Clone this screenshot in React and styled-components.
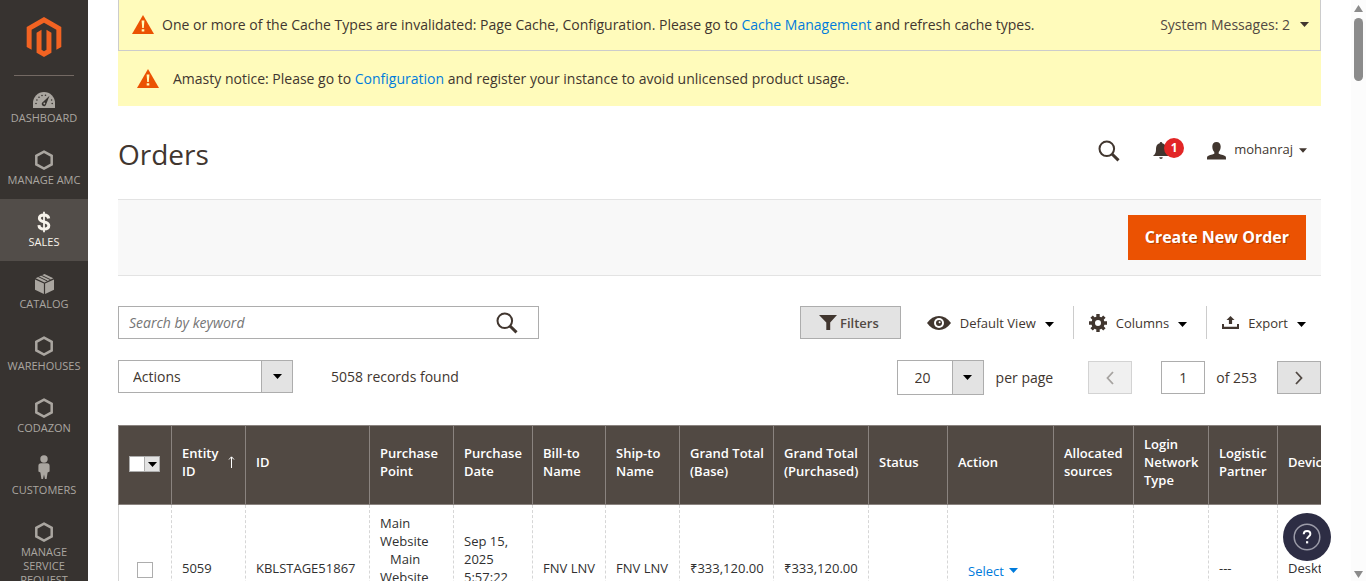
import React from "react";
import styled, { createGlobalStyle, css } from "styled-components";

const GlobalStyle = createGlobalStyle`
  *, *::before, *::after { box-sizing: border-box; }
  html, body { margin: 0; background: #fff; }
  body, button, input, select {
    font-family: "Open Sans", "Noto Sans", sans-serif;
    font-size: 14px;
    color: #41362f;
  }
  body { overflow: hidden; }
  a { color: #007bdb; text-decoration: none; }
  button { background: none; border: 0; padding: 0; cursor: pointer; }
  svg { display: block; flex: none; }
`;

const Shell = styled.div`
  display: flex;
  height: 100vh;
  overflow: hidden;
`;

/* ---------- side menu ---------- */

const Nav = styled.nav`
  flex: none;
  width: 88px;
  background: #373330;
`;

const LogoLink = styled.a`
  display: flex;
  justify-content: center;
  align-items: center;
  height: 75px;
  padding-bottom: 2px;
  color: #f26322;
`;

const Menu = styled.ul`
  list-style: none;
  margin: 0;
  padding: 0;
`;

const MenuItem = styled.li`
  &:first-child::before {
    content: "";
    display: block;
    height: 1px;
    margin: 0 14px -1px;
    background: #736963;
  }
`;

const MenuLink = styled.a`
  display: flex;
  flex-direction: column;
  align-items: center;
  gap: 3px;
  padding: 13px 0 12px;
  font-size: 11px;
  line-height: 14px;
  text-align: center;
  text-transform: uppercase;
  color: ${(p) => (p.$active ? "#f7f3eb" : "#aaa6a0")};
  background: ${(p) => (p.$active ? "#524d49" : "transparent")};
`;

const MenuLabel = styled.span`
  max-width: ${(p) => (p.$narrow ? "60px" : "88px")};
`;

const MenuIcon = styled.span`
  display: flex;
  align-items: center;
  justify-content: center;
  height: 20px;
`;

/* ---------- page ---------- */

const Main = styled.main`
  flex: 1;
  min-width: 0;
  padding: 0 30px;
`;

const SystemBar = styled.div`
  display: flex;
  align-items: center;
  height: 51px;
  padding: 0 11px 2px 13px;
  background: #fffbbb;
  border: 1px solid #ccc;
  border-top: 0;
`;

const Message = styled.p`
  margin: 0 auto 0 8px;
`;

const Notice = styled.div`
  display: flex;
  align-items: center;
  gap: 14px;
  height: 55px;
  padding: 0 19px;
  background: #fffbbb;
`;

const NoticeText = styled.p`
  margin: 0;
`;

const SystemToggle = styled.button`
  display: flex;
  align-items: center;
  gap: 10px;
  color: #514943;
`;

const Header = styled.header`
  display: flex;
  align-items: center;
  height: 93px;
  padding: 0 14px 4px 0;
`;

const Title = styled.h1`
  margin: 6px auto 0 0;
  font-size: 28px;
  line-height: 38px;
  font-weight: 400;
`;

const HeaderButton = styled.button`
  position: relative;
  display: flex;
  align-items: center;
  gap: 6px;
  margin-left: ${(p) => p.$before || 0}px;
  font-size: 13px;
  line-height: 18px;
`;

const Badge = styled.span`
  position: absolute;
  left: 11px;
  top: -4px;
  width: 20px;
  height: 20px;
  border-radius: 50%;
  background: #e22626;
  color: #fff;
  font-size: 12px;
  line-height: 20px;
  font-weight: 700;
  text-align: center;
`;

const UserName = styled.span`
  padding: 0 0 3px 2px;
`;

const ActionBar = styled.div`
  display: flex;
  justify-content: flex-end;
  padding: 15px;
  background: #f8f8f8;
  border: solid #e3e3e3;
  border-width: 1px 0;
`;

const PrimaryButton = styled.button`
  height: 45px;
  padding: 0 17px 2px;
  background: #eb5202;
  color: #fff;
  font-size: 16px;
  font-weight: 700;
  text-shadow: 1px 1px 0 rgba(0, 0, 0, 0.25);
`;

const Row = styled.div`
  display: flex;
  align-items: center;
  margin-top: ${(p) => p.$top}px;
`;

const SearchBox = styled.form`
  display: flex;
  align-items: center;
  width: 421px;
  height: 33px;
  margin-right: auto;
  padding: 0 20px 0 10px;
  border: 1px solid #adadad;
`;

const SearchInput = styled.input`
  flex: 1;
  min-width: 0;
  padding: 0;
  border: 0;
  outline: 0;
  &::placeholder { font-style: italic; color: #757575; opacity: 1; }
`;

const FilterButton = styled.button`
  display: flex;
  align-items: center;
  gap: 3px;
  height: 33px;
  margin-right: 11px;
  padding: 0 21px 0 18px;
  background: #e3e3e3;
  border: 1px solid #adadad;
  font-weight: 600;
  color: #514943;
  font-size: 13px;
`;

const ToolButton = styled.button`
  display: flex;
  align-items: center;
  gap: 9px;
  height: 33px;
  padding: 0 ${(p) => (p.$last ? 15 : 19)}px 0 15px;
  font-size: 13px;
  ${(p) => p.$divided && css`border-left: 1px solid #ccc;`}
  svg:last-child { margin-top: 3px; }
`;

const BulkGroup = styled.div`
  display: flex;
  align-items: center;
  margin: 0 auto 2px 0;
`;

const SelectBox = styled.div`
  display: flex;
  width: ${(p) => p.$width}px;
  height: ${(p) => p.$height}px;
  border: 1px solid #adadad;
`;

const Select = styled.select`
  flex: 1;
  min-width: 0;
  appearance: none;
  border: 0;
  outline: 0;
  background: #fff;
  padding: 0 0 0 ${(p) => p.$inset}px;
`;

const SelectArrow = styled.span`
  display: flex;
  align-items: center;
  justify-content: center;
  width: 31px;
  background: #e3e3e3;
  border-left: 1px solid #adadad;
`;

const Records = styled.span`
  margin-left: 38px;
`;

const PerPage = styled.label`
  margin: 0 35px 0 12px;
`;

const PageButton = styled.button`
  display: flex;
  align-items: center;
  justify-content: center;
  width: 44px;
  height: 33px;
  background: #e3e3e3;
  border: 1px solid #adadad;
  color: #514943;
  &:disabled { background: #f0f0f0; border-color: #d3d3d3; color: #a6a3a0; }
`;

const PageInput = styled.input`
  width: 44px;
  height: 33px;
  margin: 0 11px 0 29px;
  padding: 0;
  border: 1px solid #adadad;
  text-align: center;
`;

const PageTotal = styled.label`
  margin-right: 20px;
`;

/* ---------- grid ---------- */

const TableWrap = styled.div`
  margin-top: 30px;
  overflow: hidden;
`;

const Table = styled.table`
  width: 1250px;
  table-layout: fixed;
  border-spacing: 0;
  font-size: 13px;
  line-height: 18px;
`;

const Th = styled.th`
  height: 80px;
  padding: 0 8px 6px 10px;
  background: #514943;
  border: solid #8a837f;
  border-width: 1px 0 1px 1px;
  color: #fff;
  font-weight: 600;
  text-align: left;
`;

const Td = styled.td`
  padding: 9px 6px 7px 10px;
  border-left: 1px ${(p) => (p.$first ? "solid" : "dashed")} #d6d6d6;
  color: #303030;
`;

const SortHead = styled.span`
  display: flex;
  align-items: center;
  justify-content: space-between;
  padding-right: 2px;
`;

const MultiSelect = styled.button`
  display: flex;
  width: 31px;
  height: 16px;
  margin-top: 4px;
  background: #fff;
  border: 1px solid #adadad;
`;

const MultiArrow = styled.span`
  display: flex;
  align-items: center;
  justify-content: center;
  width: 15px;
  height: 14px;
  margin-left: auto;
  background: #e3e3e3;
  border-left: 1px solid #adadad;
`;

const Checkbox = styled.input`
  display: block;
  appearance: none;
  width: 16px;
  height: 16px;
  margin: 4px 0 0 8px;
  border: 1px solid #adadad;
  background: #fff;
`;

const Indented = styled.div`
  text-indent: 10px;
`;

const RowAction = styled.button`
  display: flex;
  align-items: center;
  gap: 5px;
  padding: 5px 0 0 10px;
  font-size: 13px;
  color: #007bdb;
`;

const HelpButton = styled.button`
  position: fixed;
  right: 35px;
  bottom: 20px;
  display: flex;
  align-items: center;
  justify-content: center;
  width: 48px;
  height: 48px;
  border-radius: 50%;
  background: #2d2d44;
`;

const ScrollTrack = styled.div`
  display: flex;
  flex-direction: column;
  align-items: center;
  flex: none;
  width: 15px;
  padding: 5px 0 3px;
  background: #fcfcfc;
`;

const ScrollThumb = styled.div`
  width: 9px;
  height: 63px;
  margin: 6px 0 auto;
  border-radius: 5px;
  background: #8b8b8b;
`;

/* ---------- drawings ---------- */

const Caret = ({ color = "#000", size = 9 }) => (
  <svg width={size} height="5" viewBox="0 0 9 5" fill={color}><path d="M0 0h9L4.500 5z" /></svg>
);

const Magento = () => (
  <svg width="40" height="40" viewBox="0 0 24 24" fill="currentColor">
    <path d="M12 24l-4.455-2.572v-12l2.970-1.715v12.001l1.485.902 1.485-.902V7.713l2.971 1.715v12L12 24zM22.391 6v12l-2.969 1.714V7.713L12 3.430 4.574 7.713v12.001L1.609 18V6L12 0l10.391 6z" />
  </svg>
);

const Warning = () => (
  <svg width="22" height="19" viewBox="0 0 22 19">
    <path d="M11 0l11 19H0z" fill="#eb5202" />
    <path d="M9.600 5.500h2.800l-.6 7.500h-1.600zM9.700 14.200h2.600v2.400H9.700z" fill="#fffbbb" />
  </svg>
);

const Hexagon = () => (
  <svg width="18" height="20" viewBox="0 0 18 20" fill="none" stroke="currentColor" strokeWidth="2.500">
    <path d="M9 1.600l7.700 4.200v8.600L9 18.600l-7.700-4.200V5.800z" />
  </svg>
);

const Gauge = () => (
  <svg width="22" height="20" viewBox="0 -4 22 20">
    <path d="M0 16v-5a11 11 0 0 1 22 0v5z" fill="currentColor" />
    <g fill="#373330">
      <circle cx="3" cy="11.500" r=".8" /><circle cx="3.900" cy="8" r=".8" /><circle cx="6" cy="5.300" r=".8" />
      <circle cx="9" cy="3.500" r=".8" /><circle cx="12.500" cy="3.300" r=".8" /><circle cx="18.600" cy="8" r=".8" />
      <circle cx="19.200" cy="11.500" r=".8" />
      <path d="M16.500 3.800l-3.200 8.300a2.300 2.300 0 1 1-3.400-2.200z" />
    </g>
    <circle cx="11.300" cy="11.500" r=".9" fill="currentColor" />
  </svg>
);

const Dollar = () => (
  <svg width="14" height="22" viewBox="0 0 14 22" fill="none" stroke="currentColor">
    <path d="M11.700 7.400C11.300 4.900 9.500 4 7 4 4.300 4 2.400 5.200 2.400 7.300c0 4.900 9.400 2.200 9.400 7.300 0 2.200-2 3.500-4.800 3.500-2.900 0-4.900-1.300-5.100-4" strokeWidth="3" />
    <path d="M7 .8v20.400" strokeWidth="1.800" />
  </svg>
);

const Box = () => (
  <svg width="19" height="20" viewBox="0 0 19 20" fill="currentColor">
    <path d="M0 5.600l8.900 3.900V20L0 15.800zM19 5.600l-8.900 3.900V20l8.900-4.200zM.6 4.300L9.500 0l8.900 4.300-8.900 4.100z" />
    <path d="M3.200 2.600l9.300 4.500M6.200 1.200l9.300 4.500" stroke="#373330" strokeWidth="1" />
  </svg>
);

const Person = () => (
  <svg width="12" height="32" viewBox="0 0 12 32" fill="currentColor">
    <circle cx="6" cy="5" r="3.700" />
    <path d="M3 9.300h6c1.800 0 2.600 1 2.600 2.600v5.600l-2 1L8.600 25H7l-1-4.500L5 25H3.400l-1-6.500-2-1v-5.600c0-1.600.8-2.600 2.600-2.600z" />
  </svg>
);

const Search = () => (
  <svg width="22" height="22" viewBox="0 0 22 22" fill="none" stroke="#41362f">
    <circle cx="8.800" cy="8.800" r="7.300" strokeWidth="2" />
    <path d="M14 14l6.500 6.300" strokeWidth="3" />
  </svg>
);

const Bell = () => (
  <svg width="16" height="18" viewBox="0 0 16 18" fill="#41362f">
    <path d="M8 0c.8 0 1.300.6 1.300 1.300C12 2 13 4.200 13 7c0 4 1 5.300 3 7H0c2-1.700 3-3 3-7 0-2.800 1-5 3.700-5.700C6.700.6 7.200 0 8 0zM6.300 15.300h3.400C9.700 16.400 9 17 8 17s-1.700-.6-1.700-1.700z" />
  </svg>
);

const User = () => (
  <svg width="19" height="18" viewBox="0 0 19 18" fill="#41362f">
    <path d="M9.500 0c2.700 0 4.200 1.700 4.200 4.600 0 2.300-.8 4.300-2 5.500v1.600c2.600 1.100 6 1.500 7 2.800.3.500.3 2 .3 3H0c0-1 0-2.500.3-3 1-1.300 4.400-1.700 7-2.800v-1.600c-1.200-1.200-2-3.200-2-5.500C5.300 1.700 6.800 0 9.500 0z" />
  </svg>
);

const Funnel = () => (
  <svg width="18" height="15" viewBox="0 0 18 15" fill="#41362f"><path d="M0 0h18l-6.800 7.500V15H7.300V7.500z" /></svg>
);

const Eye = () => (
  <svg width="24" height="14" viewBox="0 0 24 14">
    <path d="M0 7c3.300-4.500 7.300-7 12-7s8.700 2.500 12 7c-3.300 4.500-7.300 7-12 7S3.300 11.500 0 7z" fill="#41362f" />
    <circle cx="12" cy="7" r="5" fill="#fff" /><circle cx="12" cy="7" r="3" fill="#41362f" />
    <circle cx="12.600" cy="6.200" r="1" fill="#fff" />
  </svg>
);

const Gear = () => (
  <svg width="18" height="18" viewBox="0 0 18 18" fill="none" stroke="#41362f">
    <circle cx="9" cy="9" r="4.800" strokeWidth="3.600" />
    <g strokeWidth="3.400">
      <path d="M9 0v3.500M9 14.500V18M0 9h3.500M14.500 9H18M2.600 2.600l2.500 2.500M12.900 12.900l2.500 2.500M2.600 15.400l2.500-2.500M12.900 5.100l2.500-2.500" />
    </g>
  </svg>
);

const Upload = () => (
  <svg width="17" height="13" viewBox="0 0 17 13" fill="#41362f">
    <path d="M8.500 0l4 4h-2.400v4H6.900V4H4.500zM0 8h2v2.800h13V8h2v5H0z" />
  </svg>
);

const Chevron = ({ flip }) => (
  <svg width="8" height="14" viewBox="0 0 8 14" fill="none" stroke="currentColor" strokeWidth="1.800">
    <path d={flip ? "M7 1L1.500 7 7 13" : "M1 1l5.500 6L1 13"} />
  </svg>
);

const SortArrow = () => (
  <svg width="7" height="12" viewBox="0 0 7 12" fill="none" stroke="#fff">
    <path d="M3.500 12V1M1 3.500L3.500.800 6 3.500" />
  </svg>
);

const Help = () => (
  <svg width="28" height="28" viewBox="0 0 28 28" fill="none">
    <circle cx="14" cy="14" r="12.800" stroke="#9b9ba8" strokeWidth="1.500" />
    <path d="M10.700 11.300c0-2 1.400-3.300 3.400-3.300s3.300 1.200 3.300 2.900c0 2.400-3.300 2.600-3.300 5.100" stroke="#fff" strokeWidth="1.900" />
    <rect x="13" y="18.200" width="2.200" height="2.200" fill="#fff" />
  </svg>
);

const menu = [
  ["Dashboard", Gauge],
  ["Manage AMC", Hexagon],
  ["Sales", Dollar],
  ["Catalog", Box],
  ["Warehouses", Hexagon],
  ["Codazon", Hexagon],
  ["Customers", Person],
  ["Manage Service Request", Hexagon],
];

const columns = [
  ["ID", 124], ["Purchase Point", 84], ["Purchase Date", 79], ["Bill-to Name", 73],
  ["Ship-to Name", 74], ["Grand Total (Base)", 94], ["Grand Total (Purchased)", 95],
  ["Status", 79], ["Action", 106], ["Allocated sources", 80], ["Login Network Type", 75],
  ["Logistic Partner", 69], ["Device", 91],
];

export default function App() {
  return (
    <>
      <GlobalStyle />
      <Shell>
        <Nav>
          <LogoLink href="#" aria-label="Magento"><Magento /></LogoLink>
          <Menu>
            {menu.map(([label, Icon]) => (
              <MenuItem key={label}>
                <MenuLink href="#" $active={label === "Sales"}>
                  <MenuIcon><Icon /></MenuIcon>
                  <MenuLabel $narrow={label.length > 12}>{label}</MenuLabel>
                </MenuLink>
              </MenuItem>
            ))}
          </Menu>
        </Nav>

        <Main>
          <SystemBar>
            <Warning />
            <Message>
              One or more of the Cache Types are invalidated: Page Cache, Configuration. Please go to{" "}
              <a href="#">Cache Management</a> and refresh cache types.
            </Message>
            <SystemToggle>System Messages: 2 <Caret color="#41362f" /></SystemToggle>
          </SystemBar>
          <Notice>
            <Warning />
            <NoticeText>
              Amasty notice: Please go to <a href="#">Configuration</a> and register your instance to avoid
              unlicensed product usage.
            </NoticeText>
          </Notice>

          <Header>
            <Title>Orders</Title>
            <HeaderButton aria-label="Search"><Search /></HeaderButton>
            <HeaderButton $before={33} aria-label="Notifications"><Bell /><Badge>1</Badge></HeaderButton>
            <HeaderButton $before={38}><User /><UserName>mohanraj</UserName><Caret color="#41362f" size={8} /></HeaderButton>
          </Header>

          <ActionBar><PrimaryButton>Create New Order</PrimaryButton></ActionBar>

          <Row $top={30}>
            <SearchBox>
              <SearchInput aria-label="Search by keyword" placeholder="Search by keyword" />
              <HeaderButton type="button" aria-label="Search"><Search /></HeaderButton>
            </SearchBox>
            <FilterButton><Funnel />Filters</FilterButton>
            <ToolButton><Eye />Default View<Caret /></ToolButton>
            <ToolButton $divided><Gear />Columns<Caret /></ToolButton>
            <ToolButton $divided $last><Upload />Export<Caret /></ToolButton>
          </Row>

          <Row $top={21}>
            <BulkGroup>
              <SelectBox $width={175} $height={33}>
                <Select $inset={14} aria-label="Actions"><option>Actions</option></Select>
                <SelectArrow><Caret /></SelectArrow>
              </SelectBox>
              <Records>5058 records found</Records>
            </BulkGroup>
            <SelectBox $width={87} $height={35}>
              <Select $inset={17} id="per-page"><option>20</option></Select>
              <SelectArrow><Caret /></SelectArrow>
            </SelectBox>
            <PerPage htmlFor="per-page">per page</PerPage>
            <PageButton disabled aria-label="Previous page"><Chevron flip /></PageButton>
            <PageInput id="page" defaultValue="1" />
            <PageTotal htmlFor="page">of 253</PageTotal>
            <PageButton aria-label="Next page"><Chevron /></PageButton>
          </Row>

          <TableWrap>
            <Table>
              <colgroup>
                <col width={53} />
                <col width={74} />
                {columns.map(([name, width]) => <col key={name} width={width} />)}
              </colgroup>
              <thead>
                <tr>
                  <Th>
                    <MultiSelect aria-label="Select rows"><MultiArrow><Caret /></MultiArrow></MultiSelect>
                  </Th>
                  <Th><SortHead>Entity ID<SortArrow /></SortHead></Th>
                  {columns.map(([name]) => <Th key={name}>{name}</Th>)}
                </tr>
              </thead>
              <tbody>
                <tr>
                  <Td $first><Checkbox type="checkbox" aria-label="Select order 5059" /></Td>
                  <Td>5059</Td>
                  <Td>KBLSTAGE51867</Td>
                  <Td>
                    <div>Main Website</div>
                    <Indented>Main Website Store</Indented>
                    <div>Default</div>
                  </Td>
                  <Td>Sep 15, 2025 5:57:22 AM</Td>
                  <Td>FNV LNV</Td>
                  <Td>FNV LNV</Td>
                  <Td>₹333,120.00</Td>
                  <Td>₹333,120.00</Td>
                  <Td />
                  <Td><RowAction>Select <Caret color="#007bdb" /></RowAction></Td>
                  <Td />
                  <Td />
                  <Td>---</Td>
                  <Td>Desktop</Td>
                </tr>
              </tbody>
            </Table>
          </TableWrap>
        </Main>

        <ScrollTrack aria-hidden="true">
          <svg width="9" height="7" viewBox="0 0 9 7" fill="#8b8b8b"><path d="M4.500 0L9 7H0z" /></svg>
          <ScrollThumb />
          <svg width="9" height="7" viewBox="0 0 9 7" fill="#8b8b8b"><path d="M0 0h9L4.500 7z" /></svg>
        </ScrollTrack>
      </Shell>
      <HelpButton aria-label="Help"><Help /></HelpButton>
    </>
  );
}
